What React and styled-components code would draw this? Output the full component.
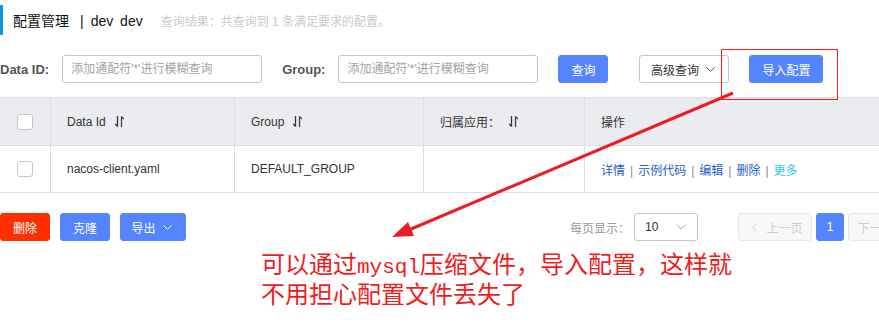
import React from "react";
import styled, { createGlobalStyle } from "styled-components";
import { ChevronDown, ChevronLeft, ChevronRight } from "lucide-react";

const GlobalStyle = createGlobalStyle`
  html, body {
    margin: 0;
    padding: 0;
    background: #fff;
    overflow: hidden;
  }
  body {
    font-family: "Liberation Sans", "Noto Sans CJK SC", sans-serif;
    font-size: 12px;
    color: #333;
  }
`;

const Page = styled.div`
  position: relative;
  width: 922px;
  height: 334px;
`;

const Header = styled.div`
  margin-top: 5px;
  height: 30px;
  display: flex;
  align-items: center;
  border-left: 3px solid #0f9ad6;
  padding-left: 10px;
`;

const Title = styled.span`
  font-size: 14px;
  color: #111;
  word-spacing: 3px;
`;

const Sep = styled.span`
  margin: 0 7px 0 11px;
`;

const Hint = styled.span`
  margin-left: 18px;
  font-size: 12px;
  color: #c9c9c9;
`;

const SearchRow = styled.div`
  display: flex;
  align-items: center;
  height: 28px;
  margin-top: 20px;
`;

const Field = styled.div`
  display: flex;
  align-items: center;
  gap: 13px;
  margin-right: 20px;
`;

const Label = styled.label`
  font-size: 13px;
  font-weight: bold;
  color: #555;
`;

const Input = styled.input`
  width: 200px;
  height: 28px;
  box-sizing: border-box;
  border: 1px solid #c4c6cf;
  border-radius: 3px;
  padding: 0 8px;
  font-family: inherit;
  font-size: 12px;
  outline: none;

  &::placeholder {
    color: #a3a3a3;
  }
`;

const variants = {
  primary: { bg: "#5584ff", border: "#5584ff", color: "#fff" },
  normal: { bg: "#fff", border: "#c4c6cf", color: "#333" },
  danger: { bg: "#ff3000", border: "#ff3000", color: "#fff" },
  disabled: { bg: "#f7f8fa", border: "#e6e7eb", color: "#cccccc" },
};

const Button = styled.button`
  width: ${(p) => p.$w}px;
  height: 28px;
  margin-left: ${(p) => p.$ml || 0}px;
  box-sizing: border-box;
  padding: 0;
  display: inline-flex;
  align-items: center;
  justify-content: center;
  gap: 4px;
  border-radius: 3px;
  border: 1px solid ${(p) => variants[p.$variant || "primary"].border};
  background: ${(p) => variants[p.$variant || "primary"].bg};
  color: ${(p) => variants[p.$variant || "primary"].color};
  font-family: inherit;
  font-size: 12px;
  cursor: pointer;
`;

const EdgeLine = styled.div`
  align-self: flex-start;
  margin: 3px 0 -12px 56px;
  height: 37px;
  border-left: 1px solid #e4e4e4;
`;

const Table = styled.div`
  margin-top: 14px;
  border-top: 1px solid #dcdee3;
`;

const Row = styled.div`
  display: grid;
  grid-template-columns: 50px 184px 189px 161px 1fr;
  height: ${(p) => (p.$head ? 48 : 47)}px;
  box-sizing: border-box;
  border-bottom: 1px solid #dcdee3;
  background: ${(p) => (p.$head ? "#ebecf0" : "#fff")};
`;

const Cell = styled.div`
  display: flex;
  align-items: center;
  gap: 8px;
  padding-left: 16px;
  border-left: 1px solid #dcdee3;
  color: #333;
  white-space: nowrap;

  &:first-child {
    border-left: none;
    padding-left: 0;
    justify-content: center;
  }
`;

const Check = styled.span`
  width: 16px;
  height: 16px;
  box-sizing: border-box;
  border: 1px solid #c4c6cf;
  border-radius: 3px;
  background: #fff;
`;

const Link = styled.span`
  color: ${(p) => p.$color || "#2a5bc8"};
`;

const Bar = styled.span`
  color: #8a8a8a;
  margin: 0 5px;
`;

const BottomRow = styled.div`
  display: flex;
  align-items: center;
  height: 28px;
  margin-top: 20px;
`;

const Group = styled.div`
  display: flex;
  align-items: center;
  gap: 10px;
`;

const Pagination = styled.div`
  margin-left: auto;
  display: flex;
  align-items: center;
`;

const SizeLabel = styled.span`
  color: #999;
  margin-right: 4px;
`;

const Select = styled.div`
  width: 64px;
  height: 28px;
  box-sizing: border-box;
  border: 1px solid #c4c6cf;
  border-radius: 3px;
  display: flex;
  align-items: center;
  justify-content: space-between;
  padding: 0 8px 0 10px;
  color: #333;
`;

const Pager = styled.div`
  display: flex;
  align-items: center;
  gap: 4px;
  margin-left: 40px;
`;

const Note = styled.div`
  margin-top: 9px;
  padding-left: 261px;
  font-family: "Noto Sans CJK SC", sans-serif;
  font-size: 24px;
  line-height: 25px;
  color: #f01c1c;
  white-space: nowrap;
`;

const NoteLatin = styled.span`
  font-family: "Liberation Mono", monospace;
  font-size: 21px;
`;

const Highlight = styled.div`
  position: absolute;
  left: 721px;
  top: 44px;
  width: 117px;
  height: 51px;
  box-sizing: border-box;
  border: 1px solid #ff1a1a;
  pointer-events: none;
`;

const Overlay = styled.svg`
  position: absolute;
  top: 0;
  left: 0;
  pointer-events: none;
`;

const SortIcon = () => (
  <svg width="11" height="13" viewBox="0 0 11 13" fill="none">
    <path d="M3.5 1v10.5M3.5 11.5L1.2 8.8" stroke="#333" strokeWidth="1.3" />
    <path d="M7.5 12V1.5M7.5 1.5l2.3 2.7" stroke="#4a3a66" strokeWidth="1.3" />
  </svg>
);

const App = () => (
  <Page>
    <GlobalStyle />
    <Header>
      <Title>
        配置管理<Sep>|</Sep>dev dev
      </Title>
      <Hint>查询结果：共查询到 1 条满足要求的配置。</Hint>
    </Header>

    <SearchRow>
      <Field>
        <Label>Data ID:</Label>
        <Input placeholder="添加通配符'*'进行模糊查询" />
      </Field>
      <Field>
        <Label>Group:</Label>
        <Input placeholder="添加通配符'*'进行模糊查询" />
      </Field>
      <Button $w={50}>查询</Button>
      <Button $w={90} $ml={31} $variant="normal">
        高级查询 <ChevronDown size={15} strokeWidth={1.4} />
      </Button>
      <Button $w={74} $ml={20}>
        导入配置
      </Button>
      <EdgeLine />
    </SearchRow>

    <Table>
      <Row $head>
        <Cell>
          <Check />
        </Cell>
        <Cell>
          Data Id <SortIcon />
        </Cell>
        <Cell>
          Group <SortIcon />
        </Cell>
        <Cell>
          归属应用： <SortIcon />
        </Cell>
        <Cell>操作</Cell>
      </Row>
      <Row>
        <Cell>
          <Check />
        </Cell>
        <Cell>nacos-client.yaml</Cell>
        <Cell>DEFAULT_GROUP</Cell>
        <Cell />
        <Cell>
          <span>
            <Link>详情</Link>
            <Bar>|</Bar>
            <Link>示例代码</Link>
            <Bar>|</Bar>
            <Link>编辑</Link>
            <Bar>|</Bar>
            <Link>删除</Link>
            <Bar>|</Bar>
            <Link $color="#2fc5e6">更多</Link>
          </span>
        </Cell>
      </Row>
    </Table>

    <BottomRow>
      <Group>
        <Button $w={50} $variant="danger">
          删除
        </Button>
        <Button $w={50}>克隆</Button>
        <Button $w={66}>
          导出 <ChevronDown size={15} strokeWidth={1.6} />
        </Button>
      </Group>
      <Pagination>
        <SizeLabel>每页显示：</SizeLabel>
        <Select>
          10 <ChevronDown size={16} strokeWidth={1.3} color="#999" />
        </Select>
        <Pager>
          <Button $w={74} $variant="disabled">
            <ChevronLeft size={15} strokeWidth={1.4} /> 上一页
          </Button>
          <Button $w={28}>1</Button>
          <Button $w={74} $variant="disabled">
            下一页 <ChevronRight size={15} strokeWidth={1.4} />
          </Button>
        </Pager>
      </Pagination>
    </BottomRow>

    <Note>
      可以通过<NoteLatin>mysql</NoteLatin>压缩文件，导入配置，这样就
      <br />
      不用担心配置文件丢失了
    </Note>

    <Highlight />
    <Overlay width="879" height="334" viewBox="0 0 879 334">
      <line x1="733" y1="88" x2="404" y2="227" stroke="#ec1c24" strokeWidth="3" />
      <polygon points="392,232 408,217 414,231" fill="#ec1c24" />
    </Overlay>
  </Page>
);

export default App;
